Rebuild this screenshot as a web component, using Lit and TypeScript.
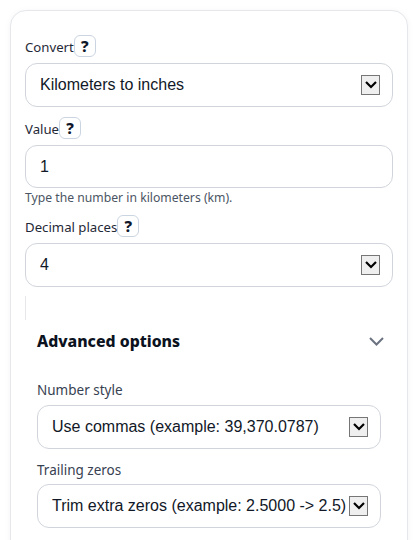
import { LitElement, html, css } from "lit";
import { customElement } from "lit/decorators.js";

const arrow = html`<span class="arrow"><svg width="12" height="8" viewBox="0 0 12 8"><path d="M1 1 L6 6 L11 1" fill="none" stroke="#000" stroke-width="2.2"/></svg></span>`;

@customElement("app-root")
export class AppRoot extends LitElement {
  static styles = css`
    :host { display: block; width: 418px; height: 540px; overflow: hidden; background: #fff; font-family: "Noto Sans", sans-serif; color: #1f2937; }
    .card { box-sizing: border-box; margin: 10px 0 0 10px; width: 398px; height: 560px; border: 1px solid #e5e7eb; border-radius: 16px; background: #fff; box-shadow: 0 1px 6px rgba(0,0,0,.05); padding: 24px 14px 0; }
    .label { display: flex; align-items: center; height: 22px; font-size: 13.2px; line-height: 22px; color: #1f2937; }
    .label span:first-child { margin-top: 2px; }
    .help { box-sizing: border-box; width: 22px; height: 22px; border: 1px solid #cbd5e1; border-radius: 6px; display: flex; align-items: center; justify-content: center; font-size: 15.5px; font-weight: 800; color: #0f172a; background: #fff; }
    .field { box-sizing: border-box; height: 44px; margin-top: 6px; border: 1px solid #d1d5db; border-radius: 12px; display: flex; align-items: center; justify-content: space-between; padding: 0 12px 0 14px; font-family: "Liberation Sans", Arial, sans-serif; font-size: 16px; color: #111827; background: #fff; white-space: nowrap; }
    .field.input { height: 43px; }
    .arrow { box-sizing: border-box; flex: none; width: 19px; height: 20px; background: #efefef; border: 1px solid #767676; display: flex; align-items: center; justify-content: center; }
    .group { margin-bottom: 10px; }
    .hint { font-size: 12.2px; line-height: 16px; color: #4b5563; margin-top: 2px; margin-bottom: -1px; }
    .rule { width: 1px; height: 24px; background: #e5e7eb; margin-top: 9px; }
    .adv { padding: 0 12px; }
    .adv-head { display: flex; align-items: center; justify-content: space-between; margin-top: 9px; height: 24px; font-size: 15.8px; font-weight: 800; color: #0b1220; }
    .adv-head svg { display: block; margin-right: -3px; }
    .sub { font-size: 13.5px; line-height: 18px; color: #374151; margin-top: 28px; }
    .sub.next { margin-top: 13px; line-height: 16px; }
  `;

  render() {
    return html`<div class="card">
      <div class="group">
        <div class="label"><span>Convert</span><span class="help">?</span></div>
        <div class="field">Kilometers to inches ${arrow}</div>
      </div>
      <div class="group">
        <div class="label"><span>Value</span><span class="help">?</span></div>
        <div class="field input">1</div>
        <div class="hint">Type the number in kilometers (km).</div>
      </div>
      <div>
        <div class="label"><span>Decimal places</span><span class="help">?</span></div>
        <div class="field">4 ${arrow}</div>
      </div>
      <div class="rule"></div>
      <div class="adv">
        <div class="adv-head">Advanced options
          <svg width="15" height="9" viewBox="0 0 15 9"><path d="M1 1 L7.5 7.5 L14 1" fill="none" stroke="#6b7280" stroke-width="2"/></svg>
        </div>
        <div class="sub">Number style</div>
        <div class="field">Use commas (example: 39,370.0787) ${arrow}</div>
        <div class="sub next">Trailing zeros</div>
        <div class="field">Trim extra zeros (example: 2.5000 -> 2.5)${arrow}</div>
      </div>
    </div>`;
  }
}
